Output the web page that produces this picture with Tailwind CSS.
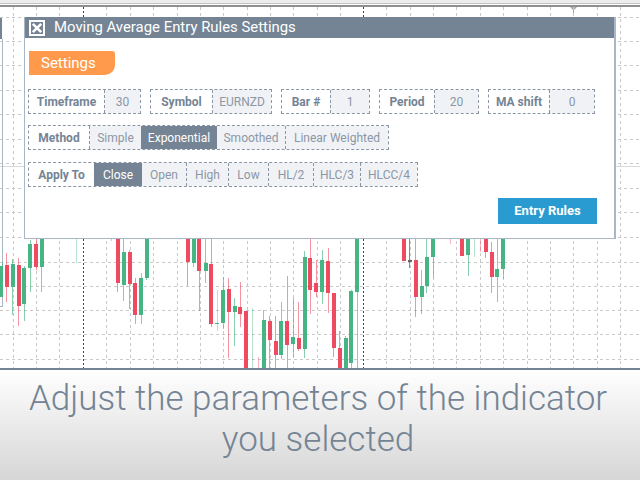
<!DOCTYPE html>
<html>
<head>
<meta charset="utf-8">
<script src="https://cdn.jsdelivr.net/npm/@tailwindcss/browser@4"></script>
</head>
<body class="m-0 bg-white">
<div class="w-[640px] h-[480px] overflow-hidden flex flex-col font-['Roboto',sans-serif]">
  <main class="relative h-[370px] shrink-0 border-b-2 border-[#748494] bg-white">
    <svg class="absolute inset-0" width="640" height="368" viewBox="0 0 640 368">
      <rect x="0" y="0" width="640" height="3" fill="#ececec"/>
      <rect x="0" y="3" width="640" height="1" fill="#c4c4c4"/>
      <rect x="0" y="5" width="640" height="2" fill="#8f8f8f"/>
      <path d="M570 7h7l-3 3v5h-1v-5z" fill="#a8a8a8"/>
      <path d="M13.5 7V368M36.5 7V368M59.5 7V368M106.5 7V368M130.5 7V368M153.5 7V368M177.5 7V368M200.5 7V368M223.5 7V368M247.5 7V368M270.5 7V368M293.5 7V368M317.5 7V368M340.5 7V368M386.5 7V368M410.5 7V368M433.5 7V368M456.5 7V368M480.5 7V368M503.5 7V368M527.5 7V368M550.5 7V368M573.5 7V368M597.5 7V368M620.5 7V368" stroke="#c9c9c9" stroke-dasharray="3 3" fill="none"/>
      <path d="M83.5 7V368M363.5 7V368" stroke="#444" stroke-dasharray="2 2" fill="none"/>
      <path d="M0 17.5H640M0 41.5H640M0 65.5H640M0 90.5H640M0 114.5H640M0 139.5H640M0 163.5H640M0 188.5H640M0 212.5H640M0 237.5H640M0 262.5H640M0 286.5H640M0 310.5H640M0 334.5H640M0 359.5H640" stroke="#c9c9c9" stroke-dasharray="3 3" fill="none"/>
      <rect x="615" y="166" width="25" height="1" fill="#d9d9d9"/>
      <rect x="0" y="166" width="24" height="1" fill="#d9d9d9"/>
      <rect x="0" y="18" width="2" height="21" fill="#748494"/>
      <rect x="2" y="39" width="1" height="268" fill="#a9b6c3"/>
      <rect x="0" y="306" width="2" height="1" fill="#a9b6c3"/>

      <path d="M6.5 253V302M18.5 258V326M36.5 238V270M117.5 238V292M129.5 250V309M135.5 278V324M187.5 238V286M199.5 238V311M211.5 238V327M228.5 278V358M240.5 282V327M246.5 311V368M269.5 316V368M275.5 316V368M287.5 276V368M298.5 302V351M310.5 238V314M316.5 260V297M328.5 248V313M333.5 293V357M339.5 331V368M415.5 238V317M485.5 238V258M491.5 242V293" stroke="#ee4b60" stroke-opacity=".6" fill="none"/>
      <path d="M2.5 262V297M12.5 259V315M24.5 266V321M30.5 240V292M41.5 238V292M123.5 238V301M141.5 273V324M146.5 238V280M193.5 238V267M205.5 238V283M223.5 277V329M234.5 298V346M263.5 310V368M281.5 302V359M293.5 298V357M304.5 251V358M322.5 250V304M345.5 336V368M351.5 290V368M357.5 238V368M421.5 270V314M426.5 238V293M433.5 238V278M468.5 238V276M497.5 238V302M503.5 238V279" stroke="#46b583" stroke-opacity=".65" fill="none"/>
      <path d="M76.5 238V263M217.5 290V331M252.5 308V368M474.5 238V257" stroke="#46b583" stroke-opacity=".4" fill="none"/>
      <path d="M111.5 238V241M258.5 357V368M450.5 238V244M480.5 238V252" stroke="#ee4b60" stroke-opacity=".4" fill="none"/>
      <path d="M409.5 238V268" stroke="#8a8a8a" fill="none"/>
      <rect x="408" y="260" width="4" height="2" fill="#666"/>

      <g fill="#ee4b60">
        <rect x="5" y="265" width="4" height="22"/><rect x="17" y="265" width="4" height="41"/><rect x="34" y="244" width="4" height="23"/>
        <rect x="116" y="238" width="4" height="45"/><rect x="128" y="252" width="4" height="32"/><rect x="133" y="283" width="4" height="32"/>
        <rect x="186" y="238" width="4" height="24"/><rect x="197" y="238" width="4" height="33"/><rect x="209" y="264" width="4" height="60"/>
        <rect x="227" y="289" width="4" height="23"/><rect x="238" y="307" width="4" height="7"/><rect x="244" y="311" width="4" height="57"/>
        <rect x="268" y="321" width="4" height="19"/><rect x="274" y="341" width="4" height="14"/><rect x="285" y="321" width="4" height="24"/>
        <rect x="297" y="338" width="4" height="11"/><rect x="308" y="258" width="4" height="32"/><rect x="314" y="283" width="4" height="9"/>
        <rect x="326" y="261" width="4" height="32"/><rect x="332" y="293" width="4" height="55"/><rect x="338" y="348" width="4" height="20"/>
        <rect x="402" y="238" width="4" height="23"/><rect x="414" y="260" width="4" height="37"/>
        <rect x="460" y="238" width="4" height="18"/><rect x="484" y="238" width="4" height="14"/><rect x="490" y="252" width="4" height="25"/>
      </g>
      <g fill="#46b583">
        <rect x="0" y="266" width="3" height="31"/><rect x="11" y="264" width="4" height="23"/><rect x="22" y="268" width="4" height="36"/>
        <rect x="28" y="244" width="4" height="24"/><rect x="40" y="238" width="4" height="29"/><rect x="122" y="252" width="4" height="33"/>
        <rect x="139" y="278" width="4" height="37"/><rect x="145" y="238" width="4" height="40"/><rect x="192" y="238" width="4" height="25"/>
        <rect x="204" y="263" width="4" height="8"/><rect x="215" y="323" width="4" height="1"/><rect x="221" y="290" width="4" height="33"/>
        <rect x="233" y="306" width="4" height="6"/><rect x="262" y="320" width="4" height="48"/><rect x="279" y="321" width="4" height="34"/>
        <rect x="291" y="337" width="4" height="7"/><rect x="303" y="257" width="4" height="92"/><rect x="320" y="260" width="4" height="32"/>
        <rect x="344" y="338" width="4" height="30"/><rect x="349" y="291" width="4" height="72"/><rect x="355" y="238" width="4" height="54"/>
        <rect x="420" y="286" width="4" height="11"/><rect x="425" y="257" width="4" height="29"/><rect x="431" y="238" width="4" height="19"/>
        <rect x="466" y="238" width="4" height="17"/><rect x="495" y="269" width="4" height="8"/><rect x="501" y="238" width="4" height="31"/>
      </g>
    </svg>

    <section class="absolute left-[24px] top-[17px] w-[592px] h-[222px] flex flex-col bg-white border-l border-b border-[#a9b6c3] border-r-2">
      <header class="h-[21px] shrink-0 flex items-center gap-[9px] pl-[4px] bg-[#748494] text-white text-[14.9px]">
        <svg width="16" height="16" viewBox="0 0 16 16" class="shrink-0">
          <rect x="1" y="1" width="14" height="14" fill="none" stroke="#fff" stroke-width="2"/>
          <path d="M3.8 3.8L12.2 12.2M12.2 3.8L3.8 12.2" stroke="#fff" stroke-width="2.6"/>
        </svg>
        <span>Moving Average Entry Rules Settings</span>
      </header>
      <div class="flex-1 flex flex-col pl-[3px] pr-[17px]">
        <div class="ml-[1px] mt-[13px] w-[86px] h-[24px] bg-[#ff9a4d] rounded-br-[10px] rounded-tr-[3px] pl-[12px] flex items-center text-white text-[15px]">Settings</div>
        <div class="mt-[14px] flex gap-[9px] h-[25px] text-[12px] text-[#8b97a5]">
          <div class="w-[113px] flex border border-dashed border-[#8a96a3]"><span class="w-[75px] flex items-center justify-center font-bold text-[#748494]">Timeframe</span><span class="flex-1 flex items-center justify-center bg-[#f1f2f6] border-l border-dashed border-[#8a96a3]">30</span></div>
          <div class="w-[122px] flex border border-dashed border-[#8a96a3]"><span class="w-[61px] flex items-center justify-center font-bold text-[#748494]">Symbol</span><span class="flex-1 flex items-center justify-center bg-[#f1f2f6] border-l border-dashed border-[#8a96a3]">EURNZD</span></div>
          <div class="w-[89px] flex border border-dashed border-[#8a96a3]"><span class="w-[48px] flex items-center justify-center font-bold text-[#748494]">Bar #</span><span class="flex-1 flex items-center justify-center bg-[#f1f2f6] border-l border-dashed border-[#8a96a3]">1</span></div>
          <div class="w-[100px] flex border border-dashed border-[#8a96a3]"><span class="w-[54px] flex items-center justify-center font-bold text-[#748494]">Period</span><span class="flex-1 flex items-center justify-center bg-[#f1f2f6] border-l border-dashed border-[#8a96a3]">20</span></div>
          <div class="w-[107px] flex border border-dashed border-[#8a96a3]"><span class="w-[60px] flex items-center justify-center font-bold text-[#748494]">MA shift</span><span class="flex-1 flex items-center justify-center bg-[#f1f2f6] border-l border-dashed border-[#8a96a3]">0</span></div>
        </div>
        <div class="mt-[11px] w-[361px] h-[25px] flex text-[12px] text-[#8b97a5] border border-dashed border-[#8a96a3]">
          <span class="w-[60px] flex items-center justify-center font-bold text-[#748494]">Method</span>
          <span class="w-[52px] flex items-center justify-center bg-[#f1f2f6] border-l border-dashed border-[#8a96a3]">Simple</span>
          <span class="w-[76px] flex items-center justify-center bg-[#748494] text-white">Exponential</span>
          <span class="w-[68px] flex items-center justify-center bg-[#f1f2f6]">Smoothed</span>
          <span class="flex-1 flex items-center justify-center bg-[#f1f2f6] border-l border-dashed border-[#8a96a3]">Linear Weighted</span>
        </div>
        <div class="mt-[12px] w-[390px] h-[25px] flex text-[12px] text-[#8b97a5] border border-dashed border-[#8a96a3]">
          <span class="w-[65px] flex items-center justify-center font-bold text-[#748494]">Apply To</span>
          <span class="w-[48px] flex items-center justify-center bg-[#748494] text-white">Close</span>
          <span class="w-[44px] flex items-center justify-center bg-[#f1f2f6]">Open</span>
          <span class="w-[42px] flex items-center justify-center bg-[#f1f2f6] border-l border-dashed border-[#8a96a3]">High</span>
          <span class="w-[40px] flex items-center justify-center bg-[#f1f2f6] border-l border-dashed border-[#8a96a3]">Low</span>
          <span class="w-[45px] flex items-center justify-center bg-[#f1f2f6] border-l border-dashed border-[#8a96a3]">HL/2</span>
          <span class="w-[47px] flex items-center justify-center bg-[#f1f2f6] border-l border-dashed border-[#8a96a3]">HLC/3</span>
          <span class="flex-1 flex items-center justify-center bg-[#f1f2f6] border-l border-dashed border-[#8a96a3]">HLCC/4</span>
        </div>
        <div class="mt-[11px] flex justify-end">
          <button class="w-[99px] h-[26px] bg-[#2a9bd0] text-white text-[13px] font-bold">Entry Rules</button>
        </div>
      </div>
    </section>
  </main>
  <footer class="flex-1 bg-gradient-to-b from-white to-[#d6d6d6] pt-[8px] pr-[4px] text-center text-[35px] leading-[41px] font-light text-[#748494]">
    <p>Adjust the parameters of the indicator</p>
    <p>you selected</p>
  </footer>
</div>
</body>
</html>
